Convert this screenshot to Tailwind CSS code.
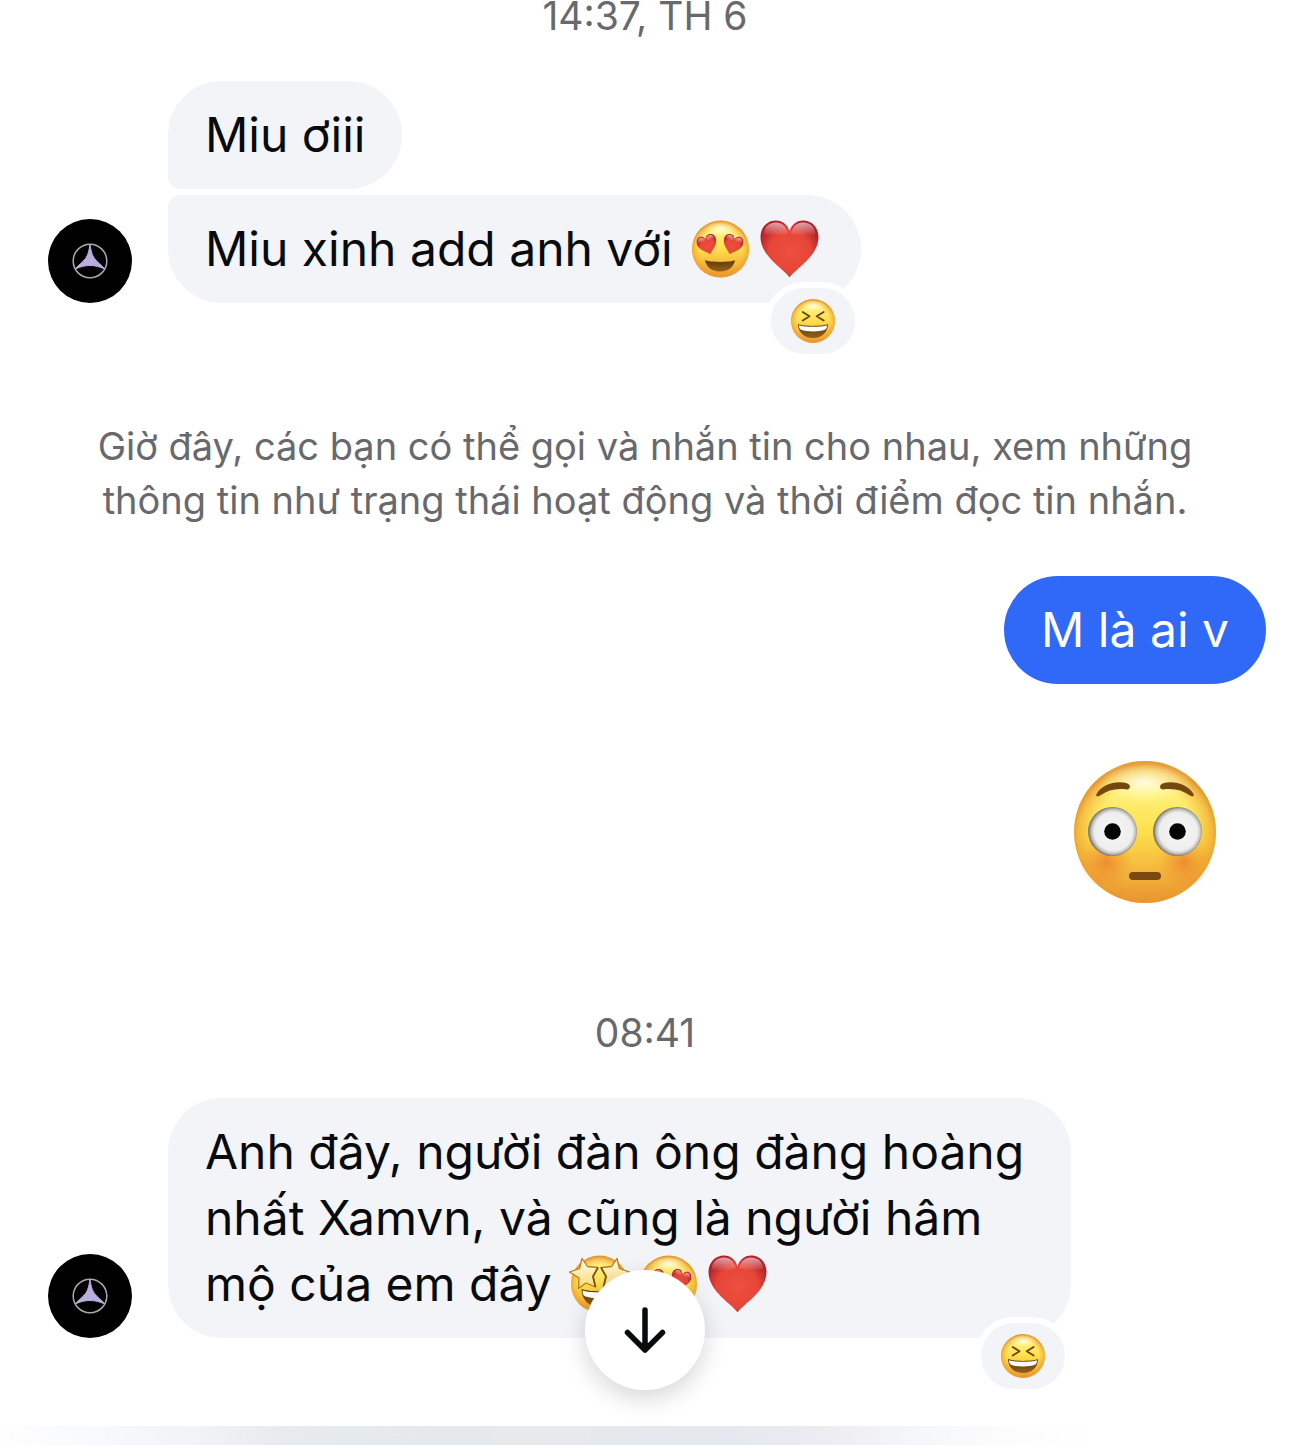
<!DOCTYPE html>
<html lang="vi">

<head>
  <meta charset="UTF-8">
  <meta name="viewport" content="width=device-width, initial-scale=1.0">
  <title>Tin nhắn</title>
  <script src="https://cdn.jsdelivr.net/npm/@tailwindcss/browser@4"></script>
</head>

<body class="bg-white font-['Inter','Noto_Sans',sans-serif] text-[#080a0b]">

  <!-- Shared drawings -->
  <svg class="absolute w-0 h-0" aria-hidden="true">
    <defs>
      <linearGradient id="face" x1="0" y1="0" x2="0" y2="1">
        <stop offset="0" stop-color="#fff3a0" />
        <stop offset="0.2" stop-color="#fff27c" />
        <stop offset="0.5" stop-color="#fddf4c" />
        <stop offset="0.78" stop-color="#f4b53c" />
        <stop offset="1" stop-color="#e8932f" />
      </linearGradient>
      <radialGradient id="rim" cx="0.5" cy="0.54" r="0.52">
        <stop offset="0.7" stop-color="#f0a02c" stop-opacity="0" />
        <stop offset="0.9" stop-color="#ec982a" stop-opacity="0.5" />
        <stop offset="1" stop-color="#df8722" stop-opacity="0.85" />
      </radialGradient>
      <radialGradient id="shine" cx="0.5" cy="0.5" r="0.5">
        <stop offset="0" stop-color="#fffff0" stop-opacity="0.9" />
        <stop offset="1" stop-color="#fff9a0" stop-opacity="0" />
      </radialGradient>
      <radialGradient id="cheek">
        <stop offset="0" stop-color="#ea7029" stop-opacity="0.65" />
        <stop offset="1" stop-color="#ec8a2c" stop-opacity="0" />
      </radialGradient>
      <radialGradient id="eyeball" cx="0.52" cy="0.5" r="0.5">
        <stop offset="0" stop-color="#f6f6f6" />
        <stop offset="0.78" stop-color="#eeeeee" />
        <stop offset="0.9" stop-color="#c2c2bf" />
        <stop offset="1" stop-color="#7d7b70" />
      </radialGradient>
      <radialGradient id="heartFill" cx="0.5" cy="0.55" r="0.56">
        <stop offset="0" stop-color="#ee4f3f" />
        <stop offset="0.65" stop-color="#e64537" />
        <stop offset="1" stop-color="#b3202a" />
      </radialGradient>
      <linearGradient id="heartShine" x1="0" y1="0" x2="0" y2="1">
        <stop offset="0" stop-color="#fff" stop-opacity="0.6" />
        <stop offset="1" stop-color="#fff" stop-opacity="0" />
      </linearGradient>
      <linearGradient id="mouth" x1="0" y1="0" x2="0" y2="1">
        <stop offset="0" stop-color="#5e3a08" />
        <stop offset="1" stop-color="#94611a" />
      </linearGradient>
      <linearGradient id="star" x1="0" y1="0" x2="0" y2="1">
        <stop offset="0" stop-color="#fffbe0" />
        <stop offset="1" stop-color="#fbdc7c" />
      </linearGradient>
    </defs>

    <symbol id="heart" viewBox="0 0 58 58">
      <path d="M29 57.500C25 50 0 37 0 17C0 7 7 .5 15.500 .5C22 .5 27 4.500 29 11.500C31 4.500 36 .5 42.500 .5C51 .5 58 7 58 17C58 37 33 50 29 57.500Z" fill="url(#heartFill)" />
      <path d="M3 14C4 6 9.500 2.500 15.500 2.500C21.500 2.500 25.500 6 27.500 13C20 17 9 16 3 14Z" fill="url(#heartShine)" />
      <path d="M55 14C54 6 48.500 2.500 42.500 2.500C36.500 2.500 32.500 6 30.500 13C38 17 49 16 55 14Z" fill="url(#heartShine)" />
    </symbol>

    <symbol id="heartEyes" viewBox="0 0 58 58">
      <circle cx="29" cy="29" r="28.500" fill="url(#face)" />
      <circle cx="29" cy="29" r="28.500" fill="url(#rim)" />
      <ellipse cx="29" cy="9" rx="17" ry="8" fill="url(#shine)" />
      <path d="M13.500 40C18 42.500 40 42.500 43.500 40C42.500 47 36.500 51.500 28.500 51.500C20.500 51.500 14.500 47 13.500 40Z" fill="url(#mouth)" />
      <svg x="5" y="14" width="22" height="22" viewBox="-3 -3 64 64">
        <g transform="rotate(-17 29 29)">
          <path d="M29 57C25 50 0 37 0 17C0 7 7 0 15 0C22 0 27 4 29 11C31 4 36 0 43 0C51 0 58 7 58 17C58 37 33 50 29 57Z" fill="url(#heartFill)" />
          <path d="M4 15C5 7 9 3 15 3C21 3 25 7 27 14C20 19 9 18 4 15Z" fill="url(#heartShine)" />
          <path d="M54 15C53 7 49 3 43 3C37 3 33 7 31 14C38 19 49 18 54 15Z" fill="url(#heartShine)" />
        </g>
      </svg>
      <svg x="30" y="14" width="22" height="22" viewBox="-3 -3 64 64">
        <g transform="rotate(17 29 29)">
          <path d="M29 57C25 50 0 37 0 17C0 7 7 0 15 0C22 0 27 4 29 11C31 4 36 0 43 0C51 0 58 7 58 17C58 37 33 50 29 57Z" fill="url(#heartFill)" />
          <path d="M4 15C5 7 9 3 15 3C21 3 25 7 27 14C20 19 9 18 4 15Z" fill="url(#heartShine)" />
          <path d="M54 15C53 7 49 3 43 3C37 3 33 7 31 14C38 19 49 18 54 15Z" fill="url(#heartShine)" />
        </g>
      </svg>
    </symbol>

    <symbol id="laugh" viewBox="0 0 44 44">
      <circle cx="22" cy="22" r="22" fill="url(#face)" />
      <circle cx="22" cy="22" r="22" fill="url(#rim)" />
      <ellipse cx="22" cy="7" rx="13" ry="6" fill="url(#shine)" />
      <path d="M11.700 13L18.500 17.300L11.700 21.500M32.700 13L25.700 17.300L32.700 21.500" fill="none" stroke="#69420c" stroke-width="1.800" stroke-linecap="round" stroke-linejoin="round" />
      <path d="M7 25C12 27.500 32 27.500 37 25C37 33 31 39 22 39C13 39 7 33 7 25Z" fill="url(#mouth)" />
      <path d="M8 26.200C13 28.200 31 28.200 36 26.200C36 28.800 35.300 30 34 30.700C28 33 16 33 10 30.700C8.700 30 8 28.800 8 26.200Z" fill="#fff" />
    </symbol>

    <symbol id="starStruck" viewBox="0 0 62 58">
      <circle cx="31" cy="29" r="28.500" fill="url(#face)" />
      <circle cx="31" cy="29" r="28.500" fill="url(#rim)" />
      <path d="M13 34C20 37 42 37 49 34C49 45 41 52 31 52C21 52 13 45 13 34Z" fill="url(#mouth)" />
      <path d="M14 35.500C21 38 41 38 48 35.500C48 39 47 41 45 41.500C37 44 25 44 17 41.500C15 41 14 39 14 35.500Z" fill="#fff" />
      <path d="M13.500 3.500L19 11.500L29.500 12.500L24.500 21.500L27 32L17.500 28L10 33.500L10.500 23L1 17L11 13.500Z" fill="url(#star)" stroke="#b9791c" stroke-width="1.300" stroke-linejoin="round" />
      <path d="M48.500 3.500L43 11.500L32.500 12.500L37.500 21.500L35 32L44.500 28L52 33.500L51.500 23L61 17L51 13.500Z" fill="url(#star)" stroke="#b9791c" stroke-width="1.300" stroke-linejoin="round" />
      <path d="M29.500 12.500L24.500 21.500L27 32M32.500 12.500L37.500 21.500L35 32" fill="none" stroke="#85540f" stroke-width="1.800" stroke-linejoin="round" />
    </symbol>

    <symbol id="flushed" viewBox="0 0 142 142">
      <circle cx="71" cy="71" r="71" fill="url(#face)" />
      <circle cx="71" cy="71" r="71" fill="url(#rim)" />
      <ellipse cx="71" cy="22" rx="48" ry="22" fill="url(#shine)" />
      <circle cx="32" cy="101" r="27" fill="url(#cheek)" />
      <circle cx="110" cy="101" r="27" fill="url(#cheek)" />
      <circle cx="38.500" cy="70.500" r="24.500" fill="url(#eyeball)" />
      <circle cx="103.500" cy="70.500" r="24.500" fill="url(#eyeball)" />
      <circle cx="38.500" cy="70.500" r="8.300" fill="#050505" />
      <circle cx="103.500" cy="70.500" r="8.300" fill="#050505" />
      <path d="M22.500 33C28 23 43 19 53.500 22.500C57 24 56.500 28.500 53 28.500C42 27 34 29 26 34.500C23.500 36 21.500 35.500 22.500 33Z" fill="#74470f" />
      <path d="M119.500 33C114 23 99 19 88.500 22.500C85 24 85.500 28.500 89 28.500C100 27 108 29 116 34.500C118.500 36 120.500 35.500 119.500 33Z" fill="#74470f" />
      <rect x="55" y="111" width="32" height="8" rx="4" fill="#7a4b10" />
    </symbol>

    <symbol id="avatar" viewBox="0 0 84 84">
      <circle cx="42" cy="42" r="42" fill="#000" />
      <circle cx="42" cy="42" r="16.800" fill="none" stroke="#aaa8ac" stroke-width="1.500" />
      <path d="M42 25C43 32 44 36 46.500 39.500C49 43 53 45.500 57 50C51 47.500 47 46.500 42 46.500C37 46.500 33 47.500 27 50C31 45.500 35 43 37.500 39.500C40 36 41 32 42 25Z" fill="#b9addd" stroke="#b9addd" stroke-width="1" />
    </symbol>
  </svg>

  <main class="relative flex flex-col min-h-screen">

    <!-- Conversation -->
    <div class="flex flex-col grow pl-12 pr-6">
      <time class="self-center mr-6 text-[39px] leading-[32px] text-[#67696c]">14:37, TH 6</time>

      <!-- Received group -->
      <section class="flex items-end gap-9 mt-[49px]">
        <svg class="size-[84px] shrink-0" role="img" aria-label="Ảnh đại diện"><use href="#avatar" /></svg>
        <div class="flex flex-col items-start gap-[6px] max-w-[903px]">
          <p class="bg-[#f2f4f8] rounded-[54px] rounded-bl-[12px] px-[37px] py-[21px] text-[48px] leading-[66px]">Miu ơiii</p>
          <div class="relative">
            <p class="bg-[#f2f4f8] rounded-[54px] rounded-tl-[12px] px-[37px] py-[21px] text-[48px] leading-[66px]">Miu xinh add anh với <svg class="inline-block align-[-12px] w-[69px] h-[58px]" role="img" aria-label="😍"><use href="#heartEyes" /></svg><svg class="inline-block align-[-12px] w-[69px] h-[58px]" role="img" aria-label="❤️"><use href="#heart" /></svg></p>
            <button aria-label="Cảm xúc" class="absolute right-0 -bottom-[57px] flex items-center justify-center w-24 h-[78px] rounded-full border-6 border-white bg-[#f2f4f8]">
              <svg class="size-11" aria-hidden="true"><use href="#laugh" /></svg>
            </button>
          </div>
        </div>
      </section>

      <!-- System notice -->
      <p class="mt-[116px] mr-6 px-6 text-center text-[38px] leading-[54px] text-[#67696c]">Giờ đây, các bạn có thể gọi và nhắn tin cho nhau, xem những thông tin như trạng thái hoạt động và thời điểm đọc tin nhắn.</p>

      <!-- Sent group -->
      <section class="flex flex-col items-end mt-[49px]">
        <p class="bg-[#3068f8] text-white rounded-[54px] px-[37px] py-[21px] text-[48px] leading-[66px]">M là ai v</p>
        <svg class="size-[142px] mt-[77px] mr-[50px]" role="img" aria-label="😳"><use href="#flushed" /></svg>
      </section>

      <time class="self-center mt-[103px] mr-6 text-[39px] leading-[54px] text-[#67696c]">08:41</time>

      <!-- Received group -->
      <section class="flex items-end gap-9 mt-[38px]">
        <svg class="size-[84px] shrink-0" role="img" aria-label="Ảnh đại diện"><use href="#avatar" /></svg>
        <div class="relative max-w-[903px]">
          <p class="bg-[#f2f4f8] rounded-[54px] px-[37px] py-[21px] text-[48px] leading-[66px]">Anh đây, người đàn ông đàng hoàng nhất Xamvn, và cũng là người hâm mộ của em đây <svg class="inline-block align-[-12px] w-[69px] h-[58px]" role="img" aria-label="🤩"><use href="#starStruck" /></svg><svg class="inline-block align-[-12px] w-[69px] h-[58px]" role="img" aria-label="😍"><use href="#heartEyes" /></svg><svg class="inline-block align-[-12px] w-[69px] h-[58px]" role="img" aria-label="❤️"><use href="#heart" /></svg></p>
          <button aria-label="Cảm xúc" class="absolute right-0 -bottom-[57px] flex items-center justify-center w-24 h-[78px] rounded-full border-6 border-white bg-[#f2f4f8]">
            <svg class="size-11" aria-hidden="true"><use href="#laugh" /></svg>
          </button>
        </div>
      </section>
    </div>

    <!-- Edge of the composer -->
    <div class="h-[19px] mt-[88px] w-[84%] bg-[linear-gradient(to_right,#fefefe_0%,#f8f9fc_9%,#f1f3f6_18%,#e9ebee_25%,#e5eaec_32%,#e5e9eb_43%,#e9e9ec_50%,#e5e9ec_57%,#e5e8f0_67%,#ececf1_76%,#f5f6f9_84%,#fdfdfd_94%,#fefefe_100%)]"></div>

    <!-- Scroll to latest -->
    <button aria-label="Cuộn xuống" class="absolute bottom-[55px] left-1/2 -translate-x-1/2 flex items-center justify-center size-[120px] rounded-full bg-white shadow-[0_8px_24px_rgba(0,0,0,0.16)]">
      <svg class="size-12" viewBox="0 0 48 48" fill="none" stroke="#080a0b" stroke-width="5.500" stroke-linecap="round" stroke-linejoin="round" aria-hidden="true">
        <path d="M24 4V44M6.500 26.500L24 44L41.500 26.500" />
      </svg>
    </button>
  </main>

</body>

</html>
